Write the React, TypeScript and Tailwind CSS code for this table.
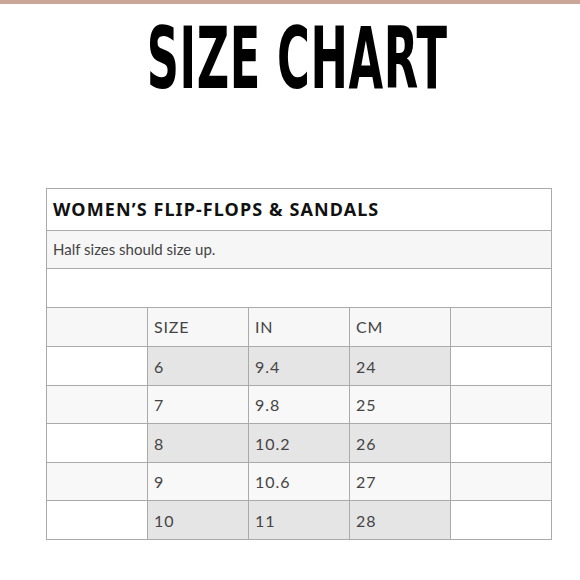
import React from 'react'

const ROWS = [
  { size: '6', inch: '9.4', cm: '24' },
  { size: '7', inch: '9.8', cm: '25' },
  { size: '8', inch: '10.2', cm: '26' },
  { size: '9', inch: '10.6', cm: '27' },
  { size: '10', inch: '11', cm: '28' },
]

export default function App() {
  return (
    <div className="w-[580px] h-[580px] bg-white overflow-hidden" style={{ fontFamily: 'Lato, "Open Sans", sans-serif' }}>
      <div className="h-[4px] bg-[#c9a697]" />
      <div className="flex justify-center mt-[12px] pl-[14px] h-[82px]">
        <h1 className="text-[85px] leading-none font-bold text-black tracking-[1px] scale-x-[0.585] whitespace-nowrap"
          style={{ fontFamily: '"DejaVu Sans Condensed", "DejaVu Sans", sans-serif' }}>SIZE CHART</h1>
      </div>
      <table className="ml-[46px] mt-[90px] w-[506px] border-collapse table-fixed text-[15px] text-[#444]">
        <tbody>
          <tr className="h-[42px]">
            <td colSpan={5} className="border border-[#aaa] px-[6px] text-[18px] font-bold text-[#111] tracking-[1.1px]"
              style={{ fontFamily: '"Noto Sans", "Open Sans", sans-serif' }}>WOMEN’S FLIP-FLOPS &amp; SANDALS</td>
          </tr>
          <tr className="h-[38px] bg-[#f6f6f6]">
            <td colSpan={5} className="border border-[#aaa] px-[6px]">Half sizes should size up.</td>
          </tr>
          <tr className="h-[39px]">
            <td colSpan={5} className="border border-[#aaa]" />
          </tr>
          <tr className="h-[39px] bg-[#f7f7f7] text-[16px] tracking-[0.8px]">
            <td className="border border-[#aaa]" />
            <td className="border border-[#aaa] px-[6px]">SIZE</td>
            <td className="border border-[#aaa] px-[6px]">IN</td>
            <td className="border border-[#aaa] px-[6px]">CM</td>
            <td className="border border-[#aaa]" />
          </tr>
          {ROWS.map((r, i) => {
            const even = i % 2 === 0
            const side = even ? 'bg-white' : 'bg-[#f8f8f8]'
            const mid = even ? 'bg-[#e6e5e6]' : 'bg-[#f8f8f8]'
            return (
              <tr key={r.size} className="h-[38.5px] text-[16px] tracking-[1px]">
                <td className={`border border-[#aaa] ${side}`} />
                <td className={`border border-[#aaa] px-[6px] pt-[2px] ${mid}`}>{r.size}</td>
                <td className={`border border-[#aaa] px-[6px] pt-[2px] ${mid}`}>{r.inch}</td>
                <td className={`border border-[#aaa] px-[6px] pt-[2px] ${mid}`}>{r.cm}</td>
                <td className={`border border-[#aaa] ${side}`} />
              </tr>
            )
          })}
        </tbody>
      </table>
    </div>
  )
}
